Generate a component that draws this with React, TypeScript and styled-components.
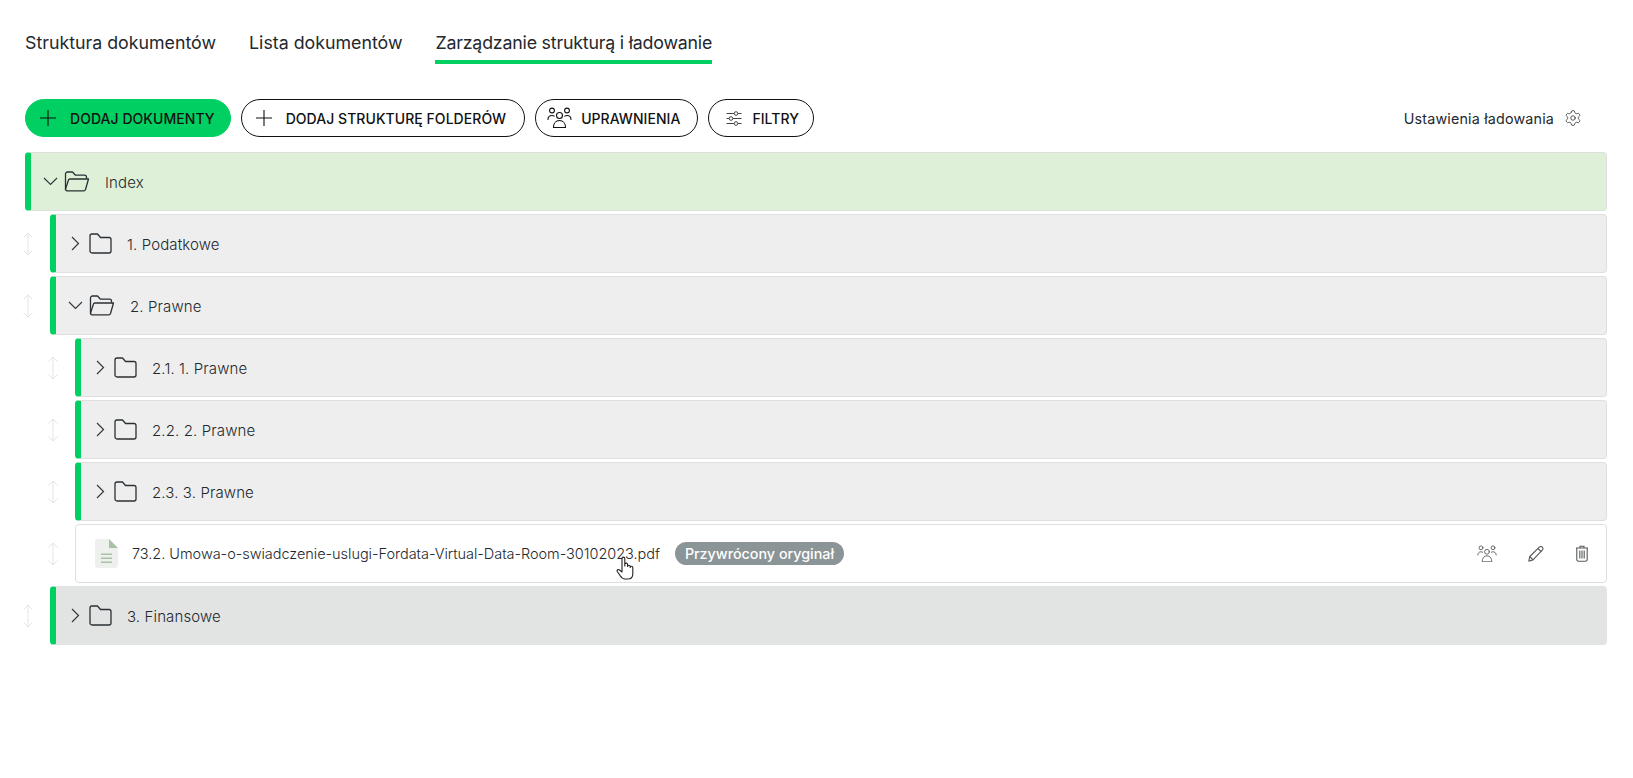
import React from 'react';
import styled, { createGlobalStyle } from 'styled-components';
import { Settings } from 'lucide-react';

const GlobalStyle = createGlobalStyle`
  html, body {
    margin: 0;
    padding: 0;
    background: #ffffff;
    font-family: Inter, "Liberation Sans", sans-serif;
    color: #23282d;
  }
`;

const Page = styled.div`
  position: relative;
  height: 778px;
  padding: 30px 26px 0 25px;
  box-sizing: border-box;
  overflow: hidden;
`;

const Tabs = styled.nav`
  display: flex;
  gap: 33px;
`;

const Tab = styled.div<{ $active?: boolean }>`
  height: 34px;
  box-sizing: border-box;
  font-size: 17.8px;
  line-height: 26px;
  font-weight: 400;
  letter-spacing: ${props => (props.$active ? '-0.2px' : '0')};
  color: #23282d;
  white-space: nowrap;
  border-bottom: 4px solid ${props => (props.$active ? '#00d062' : 'transparent')};
`;

const Toolbar = styled.div`
  display: flex;
  align-items: center;
  gap: 10px;
  margin-top: 35px;
  height: 38px;
`;

const PillButton = styled.button<{ $primary?: boolean; $gap?: number; $left?: number; $right?: number }>`
  display: inline-flex;
  align-items: center;
  gap: ${props => props.$gap ?? 14}px;
  height: 38px;
  box-sizing: border-box;
  padding: 0 ${props => props.$right ?? 15}px 0 ${props => props.$left ?? 14}px;
  border-radius: 19px;
  border: 1px solid ${props => (props.$primary ? '#00d062' : '#111111')};
  background: ${props => (props.$primary ? '#00d062' : '#ffffff')};
  color: #111111;
  font-family: inherit;
  font-size: 14px;
  font-weight: 500;
  letter-spacing: 0.05px;
  white-space: nowrap;
`;

const UploadSettings = styled.div`
  display: flex;
  align-items: center;
  gap: 10px;
  margin-left: auto;
  margin-right: 25px;
  font-size: 14.3px;
  letter-spacing: 0.18px;
  color: #23282d;
`;

const TreeList = styled.div`
  display: flex;
  flex-direction: column;
  gap: 3px;
  margin-top: 15px;
`;

const TreeLine = styled.div<{ $level: number }>`
  display: flex;
  align-items: center;
  padding-left: ${props => (props.$level > 1 ? (props.$level - 1) * 25 : 0)}px;
`;

const DragHandle = styled.div`
  flex: none;
  width: 25px;
  margin-left: -2px;
  margin-right: 2px;
  display: flex;
  color: #e2e4e3;
`;

const RowBody = styled.div<{ $tone: 'index' | 'folder' | 'hover' }>`
  flex: 1;
  display: flex;
  align-items: center;
  height: 59px;
  box-sizing: border-box;
  padding-left: 7px;
  border: 1px solid ${props => (props.$tone === 'hover' ? '#e2e4e3' : '#dfdfdf')};
  border-left: 6px solid #00d062;
  border-radius: 4px;
  background: ${props =>
    props.$tone === 'index' ? '#dff0d9' : props.$tone === 'hover' ? '#e2e4e3' : '#eeeeee'};
`;

const Toggle = styled.span`
  flex: none;
  width: 24px;
  display: flex;
  justify-content: center;
  color: #33383c;
`;

const FolderBox = styled.span`
  flex: none;
  display: flex;
  margin-left: 2px;
  margin-right: 15px;
  color: #2b3034;
`;

const RowLabel = styled.span`
  margin-top: 1px;
  font-size: 15px;
  font-weight: 300;
  letter-spacing: 0.12px;
  color: #23282d;
  white-space: nowrap;
`;

const FileBody = styled.div`
  flex: 1;
  display: flex;
  align-items: center;
  height: 59px;
  box-sizing: border-box;
  padding-left: 19px;
  padding-right: 17px;
  border: 1px solid #dfdfdf;
  border-radius: 4px;
  background: #ffffff;
`;

const FileLabel = styled(RowLabel)`
  margin-top: 0;
  margin-left: 14px;
  font-size: 14.5px;
  letter-spacing: -0.03px;
`;

const Badge = styled.span`
  margin-left: 15px;
  padding: 0 10px;
  height: 23px;
  line-height: 23px;
  border-radius: 12px;
  background: #8b9497;
  color: #ffffff;
  font-size: 14.3px;
  font-weight: 500;
  white-space: nowrap;
`;

const RowActions = styled.div`
  display: flex;
  align-items: center;
  gap: 31px;
  margin-left: auto;
  color: #54595c;
`;

const HandCursor = styled.svg`
  position: absolute;
  left: 616px;
  top: 556px;
`;

const HandleIcon = () => (
  <svg width="10" height="24" viewBox="0 0 10 24" fill="none" stroke="currentColor" strokeWidth="1">
    <path d="M5 1v22M0.500 5.500L5 1l4.500 4.500M0.500 18.500L5 23l4.500-4.500" />
  </svg>
);

const PlusIcon = () => (
  <svg width="16" height="16" viewBox="0 0 16 16" fill="none" stroke="currentColor" strokeWidth="1.1">
    <path d="M8 0v16M0 8h16" />
  </svg>
);

const ChevronClosed = () => (
  <svg width="9" height="15" viewBox="0 0 9 15" fill="none" stroke="currentColor" strokeWidth="1.2">
    <path d="M1 1l6.500 6.500L1 14" />
  </svg>
);

const ChevronOpen = () => (
  <svg width="15" height="9" viewBox="0 0 15 9" fill="none" stroke="currentColor" strokeWidth="1.2">
    <path d="M1 1l6.500 6.500L14 1" />
  </svg>
);

const ClosedFolder = () => (
  <svg width="23" height="21" viewBox="0 0 23 21" fill="none" stroke="currentColor" strokeWidth="1.3" strokeLinejoin="round">
    <path d="M1 3a2 2 0 0 1 2-2h5.500l3 3.500H20a2 2 0 0 1 2 2V18a2 2 0 0 1-2 2H3a2 2 0 0 1-2-2z" />
  </svg>
);

const OpenFolder = () => (
  <svg width="26" height="21" viewBox="0 0 26 21" fill="none" stroke="currentColor" strokeWidth="1.3" strokeLinejoin="round">
    <path d="M1.500 19V3a2 2 0 0 1 2-2h5l3 3.200h9a2 2 0 0 1 2 2v1.600" />
    <path d="M6 8h18.500l-3 10.500a2 2 0 0 1-1.800 1.300H3a1.500 1.500 0 0 1-1.400-1.900L4.400 9.200A1.600 1.600 0 0 1 6 8z" />
  </svg>
);

const PeopleIcon = ({ size = 25 }: { size?: number }) => (
  <svg width={size} height={size * 0.88} viewBox="0 0 25 22" fill="none" stroke="currentColor" strokeWidth="1.100" strokeLinecap="round">
    <circle cx="5" cy="3.500" r="2.400" />
    <circle cx="20" cy="3.500" r="2.400" />
    <circle cx="12.500" cy="8.500" r="3" />
    <path d="M1 12.500c0-2.400 1.600-4 4-4 1 0 1.600.2 2.200.6M24 12.500c0-2.400-1.600-4-4-4-1 0-1.600.2-2.200.6" />
    <path d="M6.500 20.500c0-4 2.400-7 6-7s6 3 6 7z" strokeLinejoin="round" />
  </svg>
);

const SlidersIcon = () => (
  <svg width="16" height="15" viewBox="0 0 16 15" fill="none" stroke="#444444" strokeWidth="1">
    <path d="M0.500 2.500H8M12 2.500h3.500M0.500 7.500H3M7 7.500h8.500M0.500 12.500H8M12 12.500h3.500" />
    <circle cx="10" cy="2.500" r="1.800" />
    <circle cx="5" cy="7.500" r="1.800" />
    <circle cx="10" cy="12.500" r="1.800" />
  </svg>
);

const PencilIcon = () => (
  <svg width="16" height="16" viewBox="0 0 16 16" fill="none" stroke="currentColor" strokeWidth="1.100" strokeLinejoin="round">
    <path d="M0.800 15.200l1-4.700L11.300 1.200a2 2 0 0 1 3 0 2 2 0 0 1 0 3L5 13.900z" />
    <path d="M10 2.500l3.300 3.300M1.800 10.500l3.200 3.400" />
  </svg>
);

const TrashIcon = () => (
  <svg width="14" height="17" viewBox="0 0 14 17" fill="none" stroke="currentColor" strokeWidth="1.100">
    <path d="M1 3h12M5 3V1.200h4V3M1.800 3v11.500a1.600 1.600 0 0 0 1.600 1.700h7.200a1.600 1.600 0 0 0 1.600-1.700V3M4.800 5.500v8M7 5.500v8M9.200 5.500v8" />
  </svg>
);

const FileIcon = () => (
  <svg width="23" height="29" viewBox="0 0 23 29">
    <path d="M3 0h11l9 9v17a3 3 0 0 1-3 3H3a3 3 0 0 1-3-3V3a3 3 0 0 1 3-3z" fill="#eef0ee" />
    <path d="M14 0l9 9h-9z" fill="#a9c2a6" />
    <path d="M6 14.500h11v1.600H6zM6 18.500h11v1.600H6zM6 22.500h11v1.600H6z" fill="#a9c2a6" />
  </svg>
);

const HandIcon = () => (
  <HandCursor width="19" height="24" viewBox="0 0 19 24" fill="#ffffff" stroke="#222222" strokeWidth="1.100" strokeLinejoin="round">
    <path d="M6 13V2.500a1.400 1.400 0 0 1 2.800 0V10V8.500a1.400 1.400 0 0 1 2.800 0V10.500a1.300 1.300 0 0 1 2.600 0V11.500a1.300 1.300 0 0 1 2.600 0V18c0 3-2 5-5 5H9c-2.500 0-3.500-1.200-5-3.500L1.300 15.500c-.8-1.300 1-2.700 2.200-1.500L6 16z" />
  </HandCursor>
);

type FolderRow = {
  level: number;
  label: string;
  open?: boolean;
  tone: 'index' | 'folder' | 'hover';
};

const beforeFile: FolderRow[] = [
  { level: 0, label: 'Index', open: true, tone: 'index' },
  { level: 1, label: '1. Podatkowe', tone: 'folder' },
  { level: 1, label: '2. Prawne', open: true, tone: 'folder' },
  { level: 2, label: '2.1. 1. Prawne', tone: 'folder' },
  { level: 2, label: '2.2. 2. Prawne', tone: 'folder' },
  { level: 2, label: '2.3. 3. Prawne', tone: 'folder' },
];

const FolderLine: React.FC<{ row: FolderRow }> = ({ row }) => (
  <TreeLine $level={row.level}>
    {row.level > 0 && (
      <DragHandle>
        <HandleIcon />
      </DragHandle>
    )}
    <RowBody $tone={row.tone}>
      <Toggle>{row.open ? <ChevronOpen /> : <ChevronClosed />}</Toggle>
      <FolderBox>{row.open ? <OpenFolder /> : <ClosedFolder />}</FolderBox>
      <RowLabel>{row.label}</RowLabel>
    </RowBody>
  </TreeLine>
);

const App: React.FC = () => (
  <Page>
    <GlobalStyle />
    <Tabs>
      <Tab>Struktura dokumentów</Tab>
      <Tab>Lista dokumentów</Tab>
      <Tab $active>Zarządzanie strukturą i ładowanie</Tab>
    </Tabs>

    <Toolbar>
      <PillButton $primary>
        <PlusIcon />
        DODAJ DOKUMENTY
      </PillButton>
      <PillButton $right={18}>
        <PlusIcon />
        DODAJ STRUKTURĘ FOLDERÓW
      </PillButton>
      <PillButton $gap={9} $left={11} $right={17}>
        <PeopleIcon />
        UPRAWNIENIA
      </PillButton>
      <PillButton $gap={10} $left={17} $right={14}>
        <SlidersIcon />
        FILTRY
      </PillButton>
      <UploadSettings>
        Ustawienia ładowania
        <Settings size={18} strokeWidth={1} />
      </UploadSettings>
    </Toolbar>

    <TreeList>
      {beforeFile.map(row => (
        <FolderLine key={row.label} row={row} />
      ))}
      <TreeLine $level={2}>
        <DragHandle>
          <HandleIcon />
        </DragHandle>
        <FileBody>
          <FileIcon />
          <FileLabel>73.2. Umowa-o-swiadczenie-uslugi-Fordata-Virtual-Data-Room-30102023.pdf</FileLabel>
          <Badge>Przywrócony oryginał</Badge>
          <RowActions>
            <PeopleIcon size={20} />
            <PencilIcon />
            <TrashIcon />
          </RowActions>
        </FileBody>
      </TreeLine>
      <FolderLine row={{ level: 1, label: '3. Finansowe', tone: 'hover' }} />
    </TreeList>
    <HandIcon />
  </Page>
);

export default App;
